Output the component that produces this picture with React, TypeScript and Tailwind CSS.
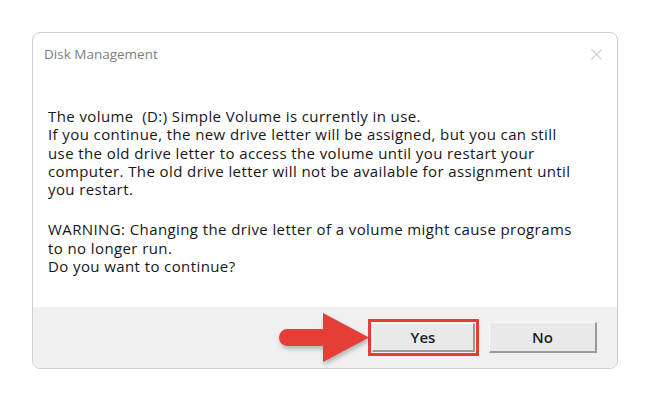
import React from 'react';

const font = { fontFamily: '"Open Sans", "Noto Sans", sans-serif' };

function RedArrow() {
  return (
    <svg width="92" height="52" viewBox="0 0 92 52" className="shrink-0 drop-shadow-[1px_3px_2px_rgba(0,0,0,0.25)]">
      <rect x="1" y="17" width="50" height="17" rx="8.5" fill="#e53e36" />
      <polygon points="45,1 91,25.5 45,50" fill="#e53e36" />
    </svg>
  );
}

function DialogButton({ label, className }: { label: string; className: string }) {
  return (
    <button
      className={`${className} bg-[#e9e9e9] border border-t-[#f8f8f8] border-l-[#f8f8f8] border-r-[#9a9a9a] border-b-[#9a9a9a] border-r-2 border-b-2 text-[15px] font-semibold text-[#1e1e1e] flex items-center justify-center`}
    >
      {label}
    </button>
  );
}

export default function App() {
  return (
    <div className="w-[650px] h-[400px] bg-white pt-[32px] pl-[32px]" style={font}>
      <div className="w-[586px] h-[337px] border border-[#cfcfcf] rounded-[8px] overflow-hidden flex flex-col bg-white">
        <div className="h-[42px] shrink-0 flex items-center justify-between pl-[11px] pr-[15px]">
          <span className="text-[13.5px] text-[#7d7d7d]">Disk Management</span>
          <svg width="11" height="11" viewBox="0 0 11 11" stroke="#d2d2d2" strokeWidth="1.2">
            <line x1="0.5" y1="0.5" x2="10.5" y2="10.5" />
            <line x1="10.5" y1="0.5" x2="0.5" y2="10.5" />
          </svg>
        </div>
        <div className="flex-1 pl-[15px] pr-[10px] pt-[32px] text-[15px] tracking-[0.4px] leading-[18.3px] text-[#161616] font-medium">
          <p>The volume&nbsp; (D:) Simple Volume is currently in use.</p>
          <p>
            If you continue, the new drive letter will be assigned, but you can still
            <br />
            use the old drive letter to access the volume until you restart your
            <br />
            computer. The old drive letter will not be available for assignment until
            <br />
            you restart.
          </p>
          <p className="mt-[22px]">
            WARNING: Changing the drive letter of a volume might cause programs
            <br />
            to no longer run.
            <br />
            Do you want to continue?
          </p>
        </div>
        <div className="h-[61px] shrink-0 bg-[#f0f0f0] flex items-center justify-end pr-[20px]">
          <RedArrow />
          <div className="border-[3px] border-[#e53e36] p-px -ml-[2px]">
            <DialogButton label="Yes" className="w-[103px] h-[29px]" />
          </div>
          <div className="ml-[10px]">
            <DialogButton label="No" className="w-[108px] h-[31px]" />
          </div>
        </div>
      </div>
    </div>
  );
}
